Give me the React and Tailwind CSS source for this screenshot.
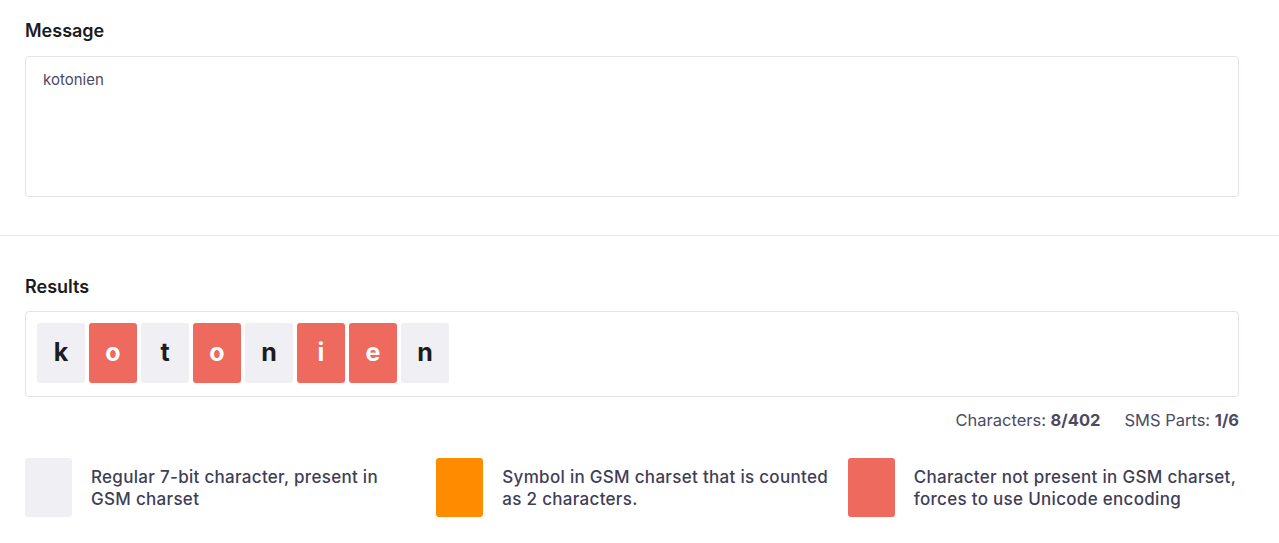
import { useState } from 'react'

const FONT = "font-['Inter','Noto_Sans',sans-serif]"

const legend = [
  { color: 'bg-[#efeff4]', text: 'Regular 7-bit character, present in GSM charset' },
  { color: 'bg-[#ff8c00]', text: 'Symbol in GSM charset that is counted as 2 characters.' },
  { color: 'bg-[#ee6a5f]', text: 'Character not present in GSM charset, forces to use Unicode encoding' },
]

const unicodeChars = ['o', 'i', 'e']

export default function App() {
  const [message, setMessage] = useState('kotonien')
  const chars = message.split('')

  return (
    <div className={`${FONT} bg-white w-[1279px] h-[543px] overflow-hidden`}>
      {/* Message */}
      <div className="pl-[25px] pr-[40px] pt-[19px] pb-[38px]">
        <h2 className="text-[18px] font-semibold text-[#1b1b22] leading-[24px] mb-[13px]">Message</h2>
        <textarea
          value={message}
          onChange={e => setMessage(e.target.value)}
          className="block w-full h-[141px] resize-none rounded-[4px] border border-[#e3e3ee] px-[17px] py-[12px] text-[15px] leading-[22px] text-[#4b4a63] outline-none"
        />
      </div>

      <div className="border-t border-[#e8e8ef]" />

      {/* Results */}
      <div className="pl-[25px] pr-[40px] pt-[39px]">
        <h2 className="text-[18px] font-semibold text-[#1b1b22] leading-[24px] mb-[12px]">Results</h2>
        <div className="flex gap-[4px] rounded-[4px] border border-[#e3e3ee] p-[11px] h-[86px]">
          {chars.map((c, i) => {
            const red = unicodeChars.includes(c)
            return (
              <div
                key={i}
                className={`w-[48px] h-[60px] rounded-[3px] flex items-center justify-center text-[25px] font-bold ${red ? 'bg-[#ee6a5f] text-white' : 'bg-[#efeff4] text-[#1b1b22]'}`}
              >
                {c}
              </div>
            )
          })}
        </div>

        <div className="flex justify-end gap-[24px] mt-[12px] text-[16.5px] leading-[22px] text-[#4b4a63]">
          <span>Characters: <b className="font-bold">8/402</b></span>
          <span>SMS Parts: <b className="font-bold">1/6</b></span>
        </div>

        {/* Legend */}
        <div className="grid grid-cols-3 gap-[20px] mt-[27px]">
          {legend.map(l => (
            <div key={l.text} className="flex items-center gap-[19px]">
              <div className={`w-[47px] h-[59px] shrink-0 rounded-[3px] ${l.color}`} />
              <p className="w-[328px] shrink-0 text-[17px] leading-[22px] tracking-[0.3px] text-[#3f3e58] font-medium">{l.text}</p>
            </div>
          ))}
        </div>
      </div>
    </div>
  )
}
